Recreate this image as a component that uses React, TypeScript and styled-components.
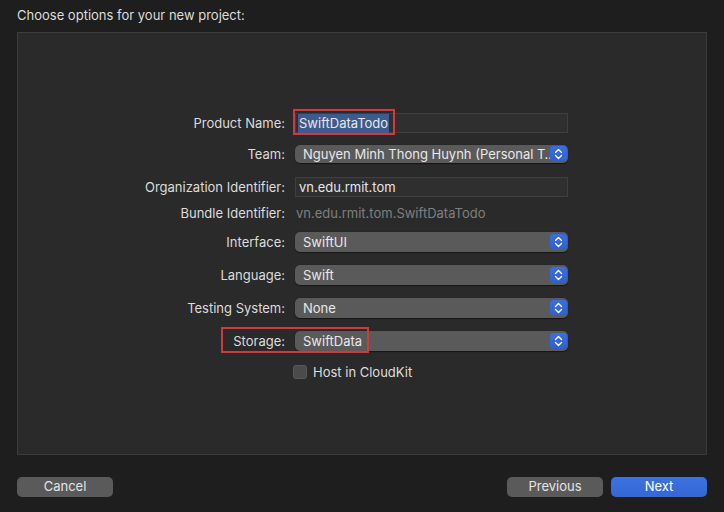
import React from "react";
import styled, { createGlobalStyle } from "styled-components";

const Global = createGlobalStyle`
  html, body { margin: 0; padding: 0; background: #1e1e1e; }
  body { font-family: Inter, "Liberation Sans", Arial, sans-serif; font-size: 13px; color: #dedede; }
  * { box-sizing: border-box; }
`;

const Window = styled.div`
  width: 724px;
  height: 512px;
  background: #1e1e1e;
  padding: 7px 17px 0 17px;
  display: flex;
  flex-direction: column;
`;

const Title = styled.div`
  height: 16px;
  line-height: 16px;
  font-size: 13px;
  color: #dcdcdc;
  margin-bottom: 9px;
`;

const Panel = styled.div`
  width: 690px;
  height: 423px;
  background: #2a2a2a;
  border: 1px solid #3c3c3c;
  padding-top: 80px;
  display: flex;
  flex-direction: column;
`;

const Row = styled.div<{ $top: number; $h?: number }>`
  position: relative;
  display: flex;
  align-items: center;
  height: ${(p) => p.$h ?? 20}px;
  margin-top: ${(p) => p.$top}px;
  gap: 10px;
`;

const Label = styled.div`
  width: 267px;
  text-align: right;
  color: #dcdcdc;
  line-height: 16px;
  white-space: nowrap;
`;

const TextField = styled.div`
  position: relative;
  width: 273px;
  height: 20px;
  background: #2f2f2f;
  border: 1px solid #3f3f3f;
  padding: 0 2px;
  display: flex;
  align-items: center;
  color: #e6e6e6;
`;

const Selection = styled.span`
  background: #3e5b8f;
  padding: 1px 1px;
  line-height: 17px;
`;

const Plain = styled.div<{ $muted?: boolean }>`
  color: ${(p) => (p.$muted ? "#7f7f7f" : "#e6e6e6")};
  padding-left: 1px;
`;

const Popup = styled.div<{ $h?: number }>`
  width: 273px;
  height: ${(p) => p.$h ?? 20}px;
  background: #5a5a5a;
  border-radius: 5px;
  box-shadow: 0 0.5px 1px rgba(0, 0, 0, 0.5);
  display: flex;
  align-items: center;
  padding: 0 1px 0 8px;
  color: #e8e8e8;
`;

const PopupText = styled.div`
  flex: 1;
  min-width: 0;
  white-space: nowrap;
  padding-right: 4px;
`;

const Stepper = styled.div`
  width: 17px;
  height: 16px;
  border-radius: 4px;
  background: linear-gradient(#3a6fe0, #2f5fcf);
  display: flex;
  align-items: center;
  justify-content: center;
  flex-shrink: 0;
`;

const Highlight = styled.div<{ $l: number; $t: number; $w: number; $h: number }>`
  position: absolute;
  left: ${(p) => p.$l}px;
  top: ${(p) => p.$t}px;
  width: ${(p) => p.$w}px;
  height: ${(p) => p.$h}px;
  border: 2px solid #d03a3c;
  pointer-events: none;
`;

const CheckRow = styled.div`
  display: flex;
  align-items: center;
  gap: 6px;
  margin-left: 275px;
`;

const Box = styled.div`
  width: 14px;
  height: 14px;
  border-radius: 3px;
  background: #4b4b4b;
  border: 1px solid #585858;
`;

const Footer = styled.div`
  display: flex;
  align-items: center;
  margin-top: 22px;
  height: 20px;
  gap: 8px;
`;

const Spacer = styled.div`
  flex: 1;
`;

const Button = styled.div<{ $primary?: boolean }>`
  width: 96px;
  height: 20px;
  border-radius: 5px;
  background: ${(p) => (p.$primary ? "linear-gradient(#3d71e0, #3467d6)" : "#5a5a5a")};
  color: ${(p) => (p.$primary ? "#ffffff" : "#e4e4e4")};
  display: flex;
  align-items: center;
  justify-content: center;
  font-size: 13px;
  line-height: 16px;
  padding-bottom: 2px;
`;

const Chevrons = () => (
  <svg width="9" height="12" viewBox="0 0 9 12" fill="none">
    <path d="M1.5 4.5 L4.5 1.5 L7.5 4.5" stroke="#fff" strokeWidth="1.4" strokeLinecap="round" strokeLinejoin="round" />
    <path d="M1.5 7.5 L4.5 10.5 L7.5 7.5" stroke="#fff" strokeWidth="1.4" strokeLinecap="round" strokeLinejoin="round" />
  </svg>
);

const PopupField = ({ value, h }: { value: string; h?: number }) => (
  <Popup $h={h}>
    <PopupText>{value}</PopupText>
    <Stepper>
      <Chevrons />
    </Stepper>
  </Popup>
);

export default function App() {
  return (
    <>
      <Global />
      <Window>
        <Title>Choose options for your new project:</Title>
        <Panel>
          <Row $top={0}>
            <Label>Product Name:</Label>
            <TextField>
              <Selection>SwiftDataTodo</Selection>
              <Highlight $l={-3} $t={-5} $w={102} $h={26} />
            </TextField>
          </Row>
          <Row $top={12} $h={18}>
            <Label>Team:</Label>
            <PopupField value="Nguyen Minh Thong Huynh (Personal T…" h={18} />
          </Row>
          <Row $top={14}>
            <Label>Organization Identifier:</Label>
            <TextField>
              <Plain>vn.edu.rmit.tom</Plain>
            </TextField>
          </Row>
          <Row $top={6}>
            <Label>Bundle Identifier:</Label>
            <Plain $muted>vn.edu.rmit.tom.SwiftDataTodo</Plain>
          </Row>
          <Row $top={9}>
            <Label>Interface:</Label>
            <PopupField value="SwiftUI" />
          </Row>
          <Row $top={13}>
            <Label>Language:</Label>
            <PopupField value="Swift" />
          </Row>
          <Row $top={13}>
            <Label>Testing System:</Label>
            <PopupField value="None" />
          </Row>
          <Row $top={13}>
            <Label>Storage:</Label>
            <PopupField value="SwiftData" />
            <Highlight $l={203} $t={-4} $w={148} $h={26} />
          </Row>
          <Row $top={11}>
            <CheckRow>
              <Box />
              <span>Host in CloudKit</span>
            </CheckRow>
          </Row>
        </Panel>
        <Footer>
          <Button>Cancel</Button>
          <Spacer />
          <Button>Previous</Button>
          <Button $primary>Next</Button>
        </Footer>
      </Window>
    </>
  );
}
